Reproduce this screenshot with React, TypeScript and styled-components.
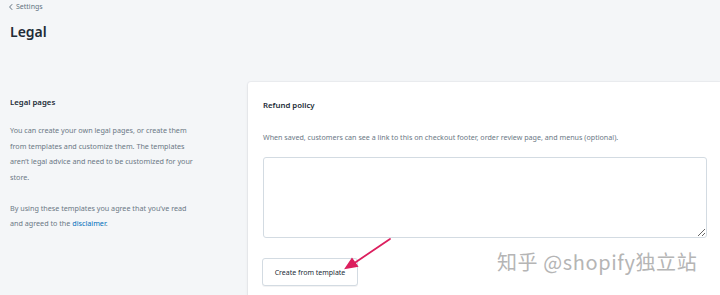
import React from 'react';
import styled, { createGlobalStyle } from 'styled-components';

const GlobalStyle = createGlobalStyle`
    html, body {
        margin: 0;
        padding: 0;
        background: #f4f6f8;
        overflow: hidden;
    }
    body {
        font-family: "Noto Sans", "Liberation Sans", sans-serif;
        color: #212b36;
    }
`;

export default function App() {
    return (
        <Page>
            <GlobalStyle />
            <Header>
                <Breadcrumb>
                    <Chevron viewBox="0 0 6 8">
                        <path d="M4.2 1.2 L1.6 4 L4.2 6.8" />
                    </Chevron>
                    Settings
                </Breadcrumb>
                <Title>Legal</Title>
            </Header>
            <Layout>
                <Aside>
                    <AsideHeading>Legal pages</AsideHeading>
                    <AsideText>
                        You can create your own legal pages, or create them
                        from templates and customize them. The templates
                        aren’t legal advice and need to be customized for your
                        store.
                    </AsideText>
                    <AsideText>
                        By using these templates you agree that you’ve read
                        and agreed to the <Link>disclaimer</Link>.
                    </AsideText>
                </Aside>
                <Card>
                    <CardHeading>Refund policy</CardHeading>
                    <HelpText>
                        When saved, customers can see a link to this on checkout footer, order review page, and menus (optional).
                    </HelpText>
                    <PolicyInput />
                    <TemplateButton>Create from template</TemplateButton>
                </Card>
            </Layout>
            <Arrow viewBox="0 0 50 36">
                <line x1="46" y1="2" x2="9" y2="27" />
                <polygon points="2,31 8,22 13,29" />
            </Arrow>
            <Watermark>知乎 @shopify独立站</Watermark>
        </Page>
    );
}

const Page = styled.div`
    position: relative;
    width: 720px;
    height: 295px;
    overflow: hidden;
`;

const Header = styled.div`
    padding: 1px 0 0 8px;
    height: 82px;
    box-sizing: border-box;
`;

const Breadcrumb = styled.div`
    display: flex;
    align-items: center;
    gap: 2px;
    font-size: 7px;
    line-height: 12px;
    color: #637381;
`;

const Chevron = styled.svg`
    width: 6px;
    height: 8px;
    fill: none;
    stroke: #637381;
    stroke-width: 1;
`;

const Title = styled.h1`
    margin: 10px 0 0 2px;
    font-size: 14px;
    line-height: 18px;
    font-weight: 600;
    color: #212b36;
`;

const Layout = styled.div`
    display: flex;
    align-items: flex-start;
`;

const Aside = styled.div`
    width: 248px;
    flex-shrink: 0;
    box-sizing: border-box;
    padding: 14px 0 0 10px;
`;

const AsideHeading = styled.h2`
    margin: 0 0 15px;
    font-size: 7.8px;
    line-height: 12px;
    font-weight: 600;
    color: #212b36;
`;

const AsideText = styled.p`
    width: 190px;
    margin: 0 0 15.5px;
    font-size: 7.2px;
    line-height: 15.5px;
    color: #6b7885;
`;

const Link = styled.span`
    color: #006fbb;
`;

const Card = styled.div`
    width: 474px;
    height: 240px;
    flex-shrink: 0;
    box-sizing: border-box;
    background: #ffffff;
    border-radius: 3px;
    box-shadow: 0 0 0 1px rgba(63, 63, 68, 0.04), 0 1px 3px 0 rgba(63, 63, 68, 0.1);
    padding: 17px 15px 0 15px;
    display: flex;
    flex-direction: column;
    align-items: flex-start;
`;

const CardHeading = styled.h2`
    margin: 0;
    font-size: 7.8px;
    line-height: 12px;
    font-weight: 600;
    color: #212b36;
`;

const HelpText = styled.p`
    margin: 20px 0 0;
    font-size: 7.15px;
    line-height: 12px;
    color: #6b7885;
    white-space: nowrap;
`;

const PolicyInput = styled.textarea`
    margin-top: 14px;
    width: 444px;
    height: 81px;
    box-sizing: border-box;
    border: 1px solid #d3dbe2;
    border-radius: 3px;
    background: #ffffff;
    font-family: inherit;
    resize: vertical;
    outline: none;
`;

const TemplateButton = styled.button`
    margin-top: 20px;
    margin-left: -1px;
    width: 96px;
    height: 28px;
    padding: 0;
    border: 1px solid #d3dbe2;
    border-radius: 3px;
    background: #ffffff;
    box-shadow: 0 1px 0 0 rgba(22, 29, 37, 0.05);
    font-family: inherit;
    font-size: 7px;
    color: #212b36;
    cursor: pointer;
`;

const Arrow = styled.svg`
    position: absolute;
    left: 344px;
    top: 237px;
    width: 50px;
    height: 36px;
    stroke: #dc1f5e;
    stroke-width: 1.8;
    stroke-linecap: round;
    fill: #dc1f5e;
`;

const Watermark = styled.div`
    position: absolute;
    left: 497px;
    top: 248px;
    font-family: "Noto Sans CJK SC", "Noto Sans", sans-serif;
    font-size: 20px;
    line-height: 28px;
    color: #b5b5b5;
    text-shadow: 0 0 1px #ffffff, 1px 1px 1px #ffffff;
    white-space: nowrap;
    letter-spacing: 0.6px;
`;
